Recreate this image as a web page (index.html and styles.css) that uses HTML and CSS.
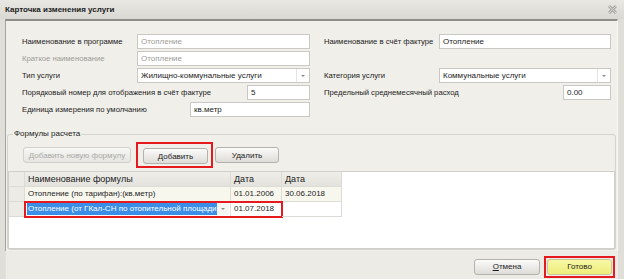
FILE: index.html
```html
<!DOCTYPE html>
<html>

<head>
    <meta charset="UTF-8">
    <title>Карточка изменения услуги</title>
    <link rel="stylesheet" href="styles.css">
</head>

<body>
    <div class="titlebar">
        <span class="title">Карточка изменения услуги</span>
        <svg class="close" width="9" height="9" viewBox="0 0 9 9">
            <path d="M1 1 L8 8 M8 1 L1 8" stroke="#a9a9a6" stroke-width="3" />
            <path d="M1 1 L8 8 M8 1 L1 8" stroke="#d6d6d2" stroke-width="1" />
        </svg>
    </div>
    <div class="dialog">
        <div class="panel">
            <div class="form">
                <div class="row">
                    <span class="label">Наименование в программе</span>
                    <div class="input w-wide muted">Отопление</div>
                </div>
                <div class="row">
                    <span class="label">Наименование в счёт фактуре</span>
                    <div class="input w-wide-r">Отопление</div>
                </div>

                <div class="row">
                    <span class="label muted">Краткое наименование</span>
                    <div class="input w-wide muted">Отопление</div>
                </div>
                <div class="row"></div>

                <div class="row">
                    <span class="label">Тип услуги</span>
                    <div class="input select w-wide">
                        <span class="value">Жилищно-коммунальные услуги</span>
                        <span class="arrow"></span>
                    </div>
                </div>
                <div class="row">
                    <span class="label">Категория услуги</span>
                    <div class="input select w-wide-r">
                        <span class="value">Коммунальные услуги</span>
                        <span class="arrow"></span>
                    </div>
                </div>

                <div class="row">
                    <span class="label">Порядковый номер для отображения в счёт фактуре</span>
                    <div class="input w-num">5</div>
                </div>
                <div class="row">
                    <span class="label">Предельный среднемесячный расход</span>
                    <div class="input w-small">0.00</div>
                </div>

                <div class="row">
                    <span class="label">Единица измерения по умолчанию</span>
                    <div class="input w-unit">кв.метр</div>
                </div>
            </div>

            <fieldset class="formulas">
                <legend>Формулы расчета</legend>
                <div class="toolbar">
                    <div class="btn disabled w-new">Добавить новую формулу</div>
                    <div class="mark">
                        <div class="btn w-btn">Добавить</div>
                    </div>
                    <div class="btn w-del">Удалить</div>
                </div>
                <div class="grid">
                    <div class="table">
                        <div class="cell rowhead head"></div>
                        <div class="cell head">Наименование формулы</div>
                        <div class="cell head">Дата</div>
                        <div class="cell head">Дата</div>

                        <div class="cell rowhead"></div>
                        <div class="cell alt">Отопление (по тарифан):(кв.метр)</div>
                        <div class="cell alt">01.01.2006</div>
                        <div class="cell alt">30.06.2018</div>

                        <div class="cell rowhead"></div>
                        <div class="editing">
                            <div class="cell editor">
                                <span class="picked">Отопление (от ГКал-СН по отопительной площади):(кв</span>
                                <span class="arrow"></span>
                            </div>
                            <div class="cell">01.07.2018</div>
                        </div>
                        <div class="cell"></div>
                    </div>
                </div>
            </fieldset>
        </div>
        <div class="footer">
            <div class="btn w-cancel"><u>О</u>тмена</div>
            <div class="mark mark-ok">
                <div class="btn ok">Готово</div>
            </div>
        </div>
    </div>
</body>

</html>
```

FILE: styles.css
```css
body {
    margin: 0;
    width: 624px;
    height: 279px;
    overflow: hidden;
    background: #dfded8;
    font-family: "Liberation Sans", Arial, sans-serif;
    font-size: 8px;
    color: #1c1c1c;
}

.titlebar {
    height: 19px;
    display: flex;
    align-items: center;
    justify-content: space-between;
    padding: 0 7px 0 5px;
    background: linear-gradient(#e9e8e3, #d9d8d2);
}

.title {
    font-weight: bold;
}

.dialog {
    margin: 0 6px 0 5px;
}

.panel {
    border-top: 2px solid #8e8d89;
    border-left: 1px solid #a5a4a0;
    border-right: 1px solid #f7f7f4;
    background: #f0efea;
    padding: 12px 0 1px 0;
}

.form {
    display: grid;
    grid-template-columns: 288px 287px;
    grid-auto-rows: 17px;
    column-gap: 14px;
    padding-left: 16px;
}

.row {
    display: flex;
    align-items: center;
    justify-content: space-between;
}

.label {
    font-size: 7.7px;
}

.muted {
    color: #9c9c98;
}

.input {
    box-sizing: border-box;
    height: 15px;
    line-height: 13px;
    padding: 0 3px;
    background: #fff;
    border: 1px solid #c9c8c4;
    white-space: nowrap;
}

.input.select {
    display: flex;
    padding-right: 0;
}

.input.select .value {
    flex: 1;
}

.arrow {
    width: 12px;
    flex-shrink: 0;
    border-left: 1px solid #e4e4e0;
    display: flex;
    align-items: center;
    justify-content: center;
}

.arrow::after {
    content: "";
    border-left: 2px solid transparent;
    border-right: 2px solid transparent;
    border-top: 2px solid #8a8a86;
}

.w-wide { width: 173px; }
.w-wide-r { width: 172px; }
.w-num { width: 63px; }
.w-small { width: 48px; }
.w-unit { width: 120px; }

.formulas {
    margin: 11px 1px 0 1px;
    padding: 0;
    border: 1px solid #d4d3cd;
    border-radius: 3px;
}

.formulas legend {
    margin-left: 5px;
    padding: 0 1px;
    line-height: 10px;
}

.toolbar {
    height: 32px;
    display: flex;
    align-items: center;
    padding-left: 15px;
}

.btn {
    box-sizing: border-box;
    height: 16px;
    display: flex;
    align-items: center;
    justify-content: center;
    border: 1px solid #b3b2ad;
    border-radius: 3px;
    background: linear-gradient(#fbfbfa, #dddcd8);
}

.btn.disabled {
    color: #a9a9a6;
    border-color: #d2d1cc;
    background: linear-gradient(#f7f7f5, #e6e5e1);
}

.w-new { width: 108px; }
.w-btn { width: 65px; }
.w-del { width: 64px; margin-left: 2px; }
.w-cancel { width: 66px; }

.mark {
    border: 2px solid #e5191e;
    padding: 4px 3px 2px 5px;
    margin-left: 5px;
}

.grid {
    height: 78px;
    box-sizing: border-box;
    background: #fff;
    border: 1px solid #d0cfca;
}

.table {
    display: grid;
    grid-template-columns: 16px 206px 51px 60px;
    grid-auto-rows: 15px;
    width: 333px;
}

.cell {
    box-sizing: border-box;
    padding: 0 3px;
    line-height: 14px;
    border-right: 1px solid #dcdbd6;
    border-bottom: 1px solid #dcdbd6;
    white-space: nowrap;
    overflow: hidden;
}

.cell.head {
    font-size: 9px;
    background: linear-gradient(#efeee9, #e3e2dc);
    color: #222;
}

.cell.rowhead {
    background: #ecebe6;
}

.cell.alt {
    background: #f8f7ee;
}

.editing {
    grid-column: 2 / 4;
    display: grid;
    grid-template-columns: 206px 51px;
    outline: 2px solid #e5191e;
    outline-offset: -1px;
}

.cell.editor {
    display: flex;
    padding: 1px 1px 1px 2px;
}

.picked {
    flex: 1;
    min-width: 0;
    overflow: hidden;
    background: #3b8ee8;
    color: #fff;
    line-height: 12px;
    padding-left: 1px;
}

.editor .arrow {
    border-left: none;
    background: #f4f4f2;
}

.footer {
    height: 31px;
    display: flex;
    justify-content: flex-end;
    align-items: center;
    padding-right: 3px;
    background: #ecebe6;
    border-left: 1px solid #e2e1dc;
}

.mark-ok {
    padding: 1px;
    margin-left: 4px;
}

.btn.ok {
    width: 65px;
    border-color: #c8c79a;
    background: linear-gradient(#f8f8a6, #eded7a);
}
```
